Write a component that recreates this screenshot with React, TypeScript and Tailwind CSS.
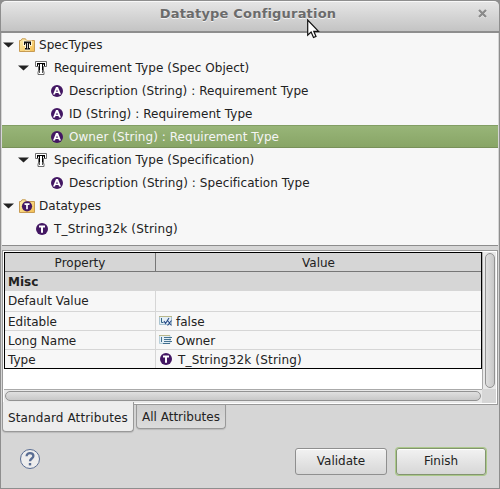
import React from "react";

function Arrow() {
  return (
    <svg width="11" height="6" viewBox="0 0 11 6" className="shrink-0">
      <path d="M0 .5H11L5.5 5.5Z" fill="#222" />
    </svg>
  );
}

function Disc({ letter }: { letter: "A" | "T" }) {
  return (
    <svg width="12" height="12" viewBox="0 0 12 12" className="shrink-0">
      <circle cx="6" cy="6" r="6" fill="#431763" />
      {letter === "A" ? (
        <path d="M5 2H7L10 9.5H8L7.5 8H4.5L4 9.5H2ZM6 4.4 5.1 6.7H6.9Z" fill="#fff" fillRule="evenodd" />
      ) : (
        <path d="M3 3.5H9M6 3V9.7" fill="none" stroke="#fff" strokeWidth="2" />
      )}
    </svg>
  );
}

function SpecIcon() {
  return (
    <svg width="12" height="14" viewBox="0 0 12 14" className="shrink-0">
      <path d="M.5 .5H11.5V5.5H8.5V10.5H9V13.5H3V10.5H3.5V5.5H.5Z" fill="#fff" stroke="#5c5c5c" strokeWidth=".9" />
      <path d="M2 2H10V5H9V3.5H8V9H7V3H5V9H4V3.5H3V5H2Z" fill="#000" />
      <path d="M4.5 9V12M7.5 9V12" stroke="#555" />
    </svg>
  );
}

function Folder({ kind }: { kind: "spec" | "data" }) {
  return (
    <svg width="16" height="14" viewBox="0 0 16 14" className="shrink-0">
      <defs>
        <linearGradient id="folder" x1="0" y1="0" x2="1" y2="1">
          <stop stopColor="#fff2b0" />
          <stop offset="1" stopColor="#f3bd51" />
        </linearGradient>
      </defs>
      <path d="M.5 13.5V2.5H2L3 .8H6.5L7.5 2.5H15.5V13.5Z" fill="url(#folder)" stroke="#c79b53" />
      {kind === "spec" ? (
        <>
          <path d="M4 2.5H13V8H11V12.5H6V8H4Z" fill="#fff6d6" />
          <path d="M5 3.5H12V7H11V5.5H10V10H11V11.5H6V10H7V5.5H6V7H5Z" fill="#111" />
          <path d="M8.5 5V10.5" stroke="#fff" strokeWidth=".8" />
        </>
      ) : (
        <>
          <circle cx="8" cy="7.3" r="5.1" fill="#431763" />
          <path d="M5.5 5.2H10.5M8 5V10.3" stroke="#fff" strokeWidth="1.7" />
        </>
      )}
    </svg>
  );
}

function FieldIcon({ editable }: { editable?: boolean }) {
  return (
    <svg width="13" height="10" viewBox="0 0 13 10" className="shrink-0">
      {editable ? (
        <>
          <path d="M.5.5H12.5V8.5H.5Z" fill="#e3eef5" stroke="#a9c3d0" />
          <path d="M0 .5H13" stroke="#b9b78b" />
          <path d="M2.5 2V6.5H4.5" fill="none" stroke="#326487" />
          <path d="M5 5 6.5 7.5 10 2M8.5 4.5 12.5 9.5M12.5 4.5 8.5 9.5" fill="none" stroke="#294b88" strokeWidth="1.1" />
        </>
      ) : (
        <>
          <path d="M.5.5H11V8.5H.5Z" fill="#e3eef5" stroke="#b7cfda" />
          <path d="M0 .5H11" stroke="#b9b78b" />
          <path d="M2.5 2V7M5 2.5H13M5 4.5H12M5 6.5H13M4 8.5H11" stroke="#326487" strokeWidth=".9" />
        </>
      )}
    </svg>
  );
}

function TreeRow({ pad, icon, label, arrow, selected, tracking = "tracking-[0.05px]" }: {
  pad: string; icon: React.ReactNode; label: string; arrow?: boolean; selected?: boolean; tracking?: string;
}) {
  return (
    <div
      className={`flex h-[23px] items-center whitespace-pre ${pad} ${
        selected
          ? "border-y border-t-[#829e64] border-b-[#789059] bg-linear-to-b from-[#98b578] to-[#88a566] text-[#f5f5f5]"
          : ""
      }`}
    >
      {arrow && <span className="mr-[5px] flex"><Arrow /></span>}
      {icon}
      <span className={`ml-1 pt-px ${tracking}`}>{label}</span>
    </div>
  );
}

function PropRow({ name, h, icon, value, tracking = "" }: {
  name: string; h: string; icon?: React.ReactNode; value?: string; tracking?: string;
}) {
  const drop = icon ? "pt-[3px]" : "pt-px";
  return (
    <div className={`flex ${h} bg-[#f7f7f7]`}>
      <div className={`flex w-[151px] items-center border-r border-[#d6d6d6] pl-[3px] ${drop}`}>{name}</div>
      <div className="flex flex-1 items-center whitespace-pre pl-[3px]">
        {icon}
        <span className={`ml-1 ${drop} ${tracking}`}>{value}</span>
      </div>
    </div>
  );
}

export default function App() {
  return (
    <div className="relative flex h-[489px] w-[500px] flex-col overflow-hidden bg-[#8e8e8e] font-['DejaVu_Sans',sans-serif] text-[12px] leading-[15px] text-[#222]">
      <header className="mx-px mt-px flex h-[30px] shrink-0 items-center rounded-t-[5px] border-t border-[#f8f8f8] bg-linear-to-b from-[#e5e5e5] to-[#c4c4c4] pb-[6px]">
        <h1 className="w-full text-center text-[13px] font-bold tracking-[0.19px] text-[#6b6b6b] [text-shadow:0_1px_0_#f3f3f3]">
          <span className="ml-[-4px]">Datatype Configuration</span>
        </h1>
        <svg width="9" height="9" viewBox="0 0 9 9" className="absolute left-[478px] top-[9px]">
          <path d="M1 1.8 8 8.8M8 1.8 1 8.8" stroke="#f2f2f2" strokeWidth="2.2" />
          <path d="M1 1 8 8M8 1 1 8" stroke="#8a8a8a" strokeWidth="2.3" />
        </svg>
      </header>

      <main className="mx-px mt-[2px] flex h-[455px] flex-col bg-[#d6d6d6]">
        <section className="mx-px h-[213px] shrink-0 border-b border-[#8c8c8c] bg-[#f7f7f7]">
          <TreeRow pad="pl-px" arrow icon={<Folder kind="spec" />} label="SpecTypes" />
          <TreeRow pad="pl-4" arrow icon={<span className="mr-[3px] ml-px flex"><SpecIcon /></span>} label="Requirement Type (Spec Object)" />
          <TreeRow pad="pl-[49px]" icon={<span className="mr-[2px] flex"><Disc letter="A" /></span>} label="Description (String) : Requirement Type" />
          <TreeRow pad="pl-[49px]" icon={<span className="mr-[2px] flex"><Disc letter="A" /></span>} label="ID (String) : Requirement Type" />
          <TreeRow selected pad="pl-[49px]" icon={<span className="mr-[2px] flex"><Disc letter="A" /></span>} label="Owner (String) : Requirement Type" />
          <TreeRow pad="pl-4" arrow icon={<span className="mr-[3px] ml-px flex"><SpecIcon /></span>} label="Specification Type (Specification)" />
          <TreeRow pad="pl-[49px]" icon={<span className="mr-[2px] flex"><Disc letter="A" /></span>} label="Description (String) : Specification Type" tracking="tracking-[0.08px]" />
          <TreeRow pad="pl-px" arrow icon={<Folder kind="data" />} label="Datatypes" />
          <TreeRow pad="pl-[34px]" icon={<span className="mr-[2px] flex"><Disc letter="T" /></span>} label="T_String32k (String)" tracking="tracking-[0.18px]" />
        </section>

        <section className="mx-px mt-1 flex h-[155px] shrink-0 flex-col border border-[#999] bg-white p-px">
          <div className="flex h-[137px]">
            <div className="w-[478px] bg-white">
              <div className="border border-black">
                <div className="flex h-[19px] border-b border-[#777] bg-[#d6d6d6] text-center">
                  <div className="w-[151px] border-r border-[#777] pt-[3px]">Property</div>
                  <div className="flex-1 pt-[3px]">Value</div>
                </div>
                <div className="flex h-[19px] items-center bg-[#d6d6d6] pl-[3px] pt-px font-bold">Misc</div>
                <div className="divide-y divide-[#d6d6d6]">
                  <PropRow name="Default Value" h="h-[21px]" />
                  <PropRow name="Editable" h="h-[19px]" icon={<FieldIcon editable />} value="false" />
                  <PropRow name="Long Name" h="h-[19px]" icon={<FieldIcon />} value="Owner" />
                  <PropRow name="Type" h="h-[18px]" icon={<span className="ml-px mr-[2px] flex"><Disc letter="T" /></span>} value="T_String32k (String)" tracking="tracking-[0.18px]" />
                </div>
              </div>
            </div>
            <div className="flex w-[14px] justify-center border-l border-[#aaa] bg-[#e9e9e9] py-px">
              <div className="w-[10px] rounded-[5px] border border-[#929292] bg-linear-to-r from-[#e0e0e0] to-[#c8c8c8]" />
            </div>
          </div>
          <div className="flex h-[14px]">
            <div className="h-[14px] w-[478px] border-t border-[#aaa] bg-[#e9e9e9] px-px pt-px">
              <div className="h-[10px] rounded-[5px] border border-[#929292] bg-linear-to-b from-[#e0e0e0] to-[#c8c8c8]" />
            </div>
            <div className="w-[14px] bg-[#d6d6d6]" />
          </div>
        </section>

        <nav className="flex h-[28px] shrink-0 items-start pl-px">
          <div className="relative -mt-[3px] h-[30px] w-[132px] whitespace-nowrap rounded-b-[4px] border border-t-0 border-[#999] bg-[#ededed] pl-[5px] pt-[9px] tracking-[0.12px] shadow-[0_1px_1px_#bbb]">
            Standard Attributes
          </div>
          <div className="ml-[2px] h-[24px] w-[90px] whitespace-nowrap rounded-b-[4px] border border-t-0 border-[#999] bg-linear-to-b from-[#cecece] to-[#dcdcdc] pl-[5px] pt-[5px] shadow-[0_1px_1px_#bbb]">
            All Attributes
          </div>
        </nav>

        <footer className="flex items-start pl-[18px] pt-[13px]">
          <svg width="22" height="22" viewBox="0 0 22 22" className="mr-[254px] mt-[2px] shrink-0">
            <circle cx="11" cy="11" r="9.5" fill="#ededed" stroke="#596d93" />
            <path d="M7.6 8.2C7.6 3.9 14.4 4.2 14.4 8.1C14.4 10.5 11 10.6 11 13.3" fill="none" stroke="#596d93" strokeWidth="2.3" />
            <path d="M9.8 15H12.2V17.4H9.8Z" fill="#596d93" />
          </svg>
          <button className="mt-[2px] h-[27px] w-[92px] rounded-[3px] border border-[#8f8f8f] bg-linear-to-b from-[#f2f2f2] to-[#d7d7d7] shadow-[inset_0_1px_0_#fff]">
            Validate
          </button>
          <button className="ml-[9px] mt-[2px] h-[27px] w-[90px] rounded-[3px] border border-[#839470] bg-linear-to-b from-[#f2f2f2] to-[#d7d7d7] shadow-[0_0_0_1px_#abc98a,inset_0_1px_0_#fff]">
            Finish
          </button>
        </footer>
      </main>

      <svg width="14" height="21" viewBox="0 0 14 21" className="absolute left-[307px] top-[19px]">
        <path d="M.7 1V16.2L4.1 13.1 6.5 18.5 9 17.4 6.8 12.3H11.5Z" fill="#fff" stroke="#111" strokeWidth="1.2" />
      </svg>
    </div>
  );
}
